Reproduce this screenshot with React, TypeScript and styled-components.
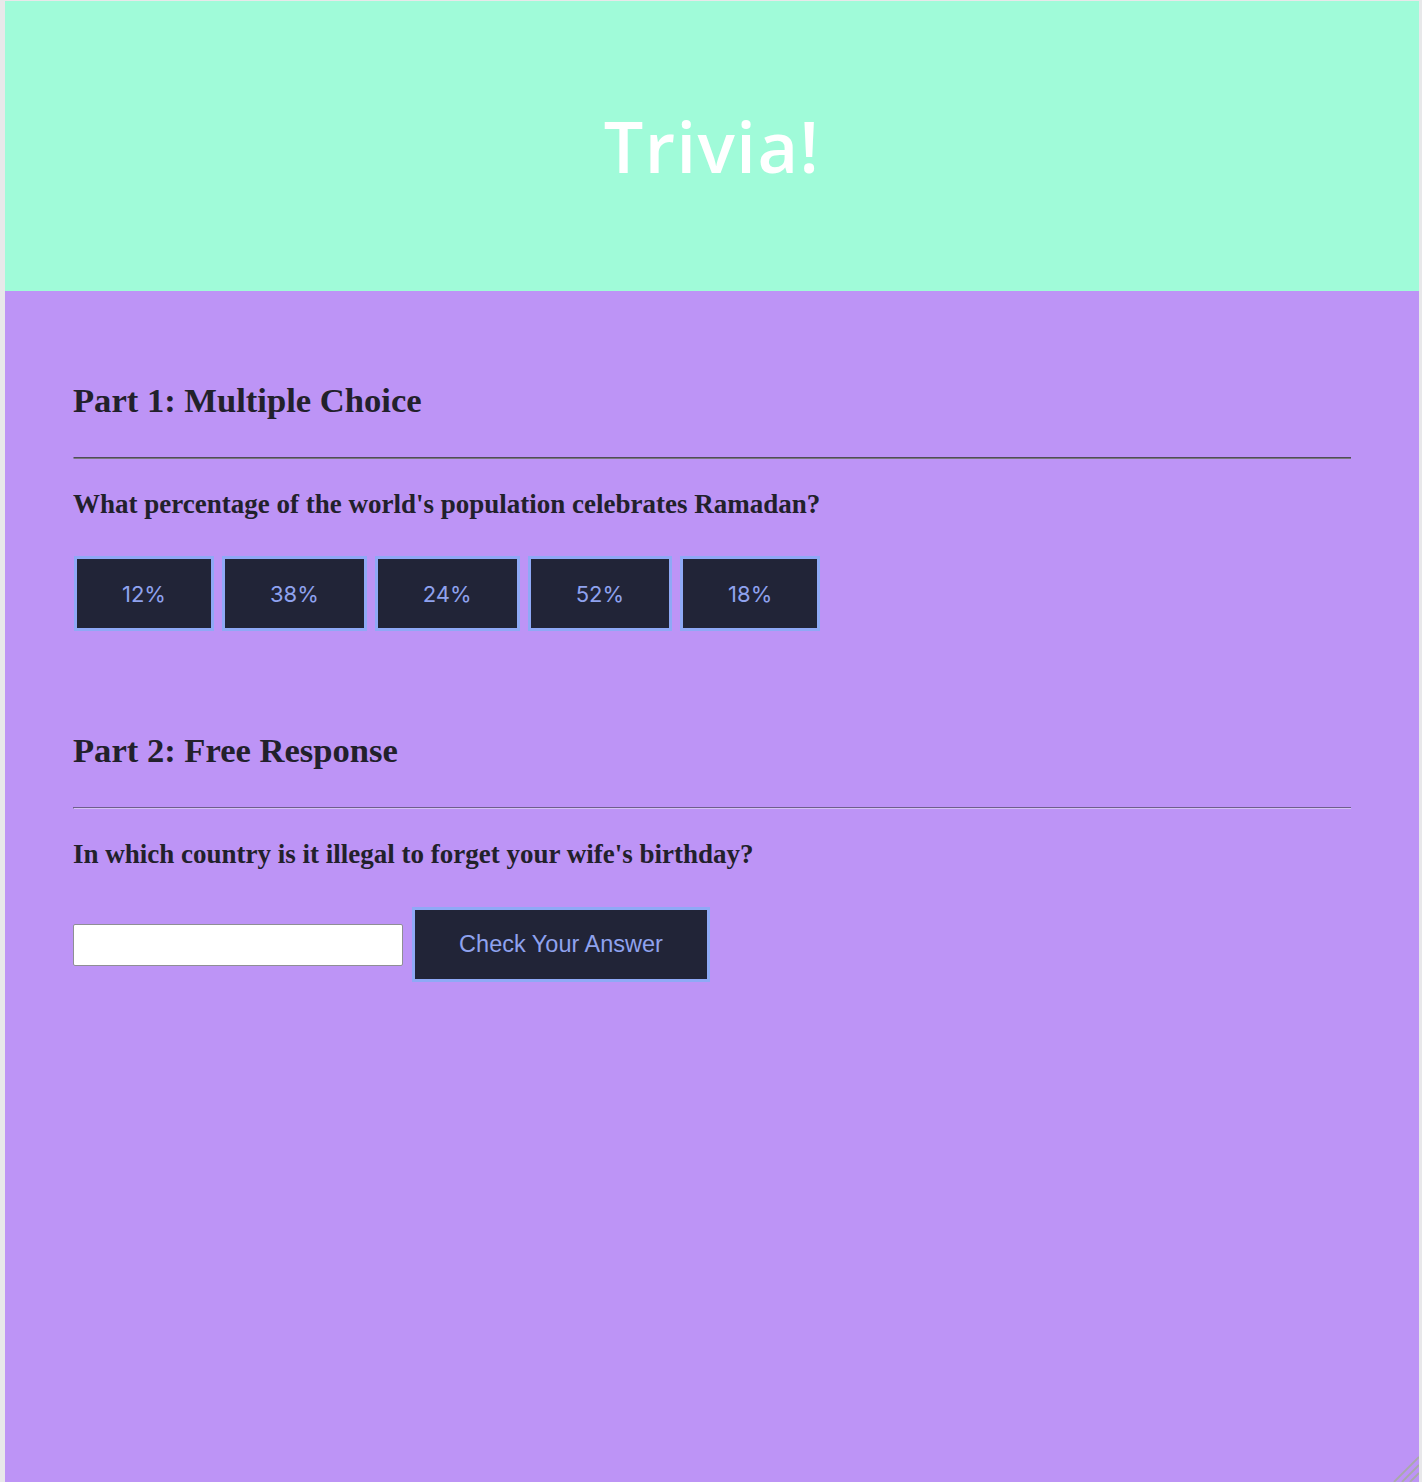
import React from "react";
import styled, { createGlobalStyle } from "styled-components";

const GlobalStyle = createGlobalStyle`
    html, body {
        margin: 0;
        padding: 0;
        background: #e8e8ea;
    }
    body {
        font-family: "Liberation Serif", "Times New Roman", serif;
    }
`;

const choices = ["12%", "38%", "24%", "52%", "18%"];

const App: React.FC = () => {
    return (
        <>
            <GlobalStyle />
            <Frame>
                <Header>
                    <Title>Trivia!</Title>
                </Header>
                <Main>
                    <Section>
                        <SectionTitle>Part 1: Multiple Choice</SectionTitle>
                        <Rule $dark />
                        <Question>What percentage of the world's population celebrates Ramadan?</Question>
                        <Choices>
                            {choices.map((c) => (
                                <ChoiceButton key={c}>{c}</ChoiceButton>
                            ))}
                        </Choices>
                    </Section>
                    <Section>
                        <SectionTitle>Part 2: Free Response</SectionTitle>
                        <Rule />
                        <Question>In which country is it illegal to forget your wife's birthday?</Question>
                        <AnswerRow>
                            <AnswerInput type="text" />
                            <CheckButton>Check Your Answer</CheckButton>
                        </AnswerRow>
                    </Section>
                    {/* textarea-style resize grip in the corner */}
                    <Grip width="26" height="26" viewBox="0 0 26 26">
                        <path
                            d="M26 1 L1 26 M26 9 L9 26 M26 17 L17 26"
                            stroke="#a9a9a9"
                            strokeWidth="1.8"
                        />
                    </Grip>
                </Main>
            </Frame>
        </>
    );
};

const Frame = styled.div`
    margin: 1px 3px 0 5px;
    min-height: 1481px;
    display: flex;
    flex-direction: column;
`;

const Header = styled.header`
    height: 290px;
    background: #a0fbd9;
    display: flex;
    align-items: center;
    justify-content: center;
`;

const Title = styled.h1`
    margin: 0;
    color: #fff;
    font-family: "Open Sans", sans-serif;
    font-weight: 600;
    font-size: 70px;
    letter-spacing: 1.5px;
`;

const Main = styled.main`
    position: relative;
    flex: 1;
    background: #bd94f6;
    padding: 64px 68px 0;
`;

const Section = styled.section`
    margin-bottom: 99px;
`;

const SectionTitle = styled.h2`
    margin: 25px 0 0;
    color: #22212b;
    font-size: 34.6px;
    font-weight: 700;
    line-height: 40px;
`;

const Rule = styled.hr<{ $dark?: boolean }>`
    margin: 37px 0 0;
    height: 0;
    border: none;
    border-top: 1px solid ${(p) => (p.$dark ? "#4f4c58" : "#6f5f8c")};
    border-bottom: 1px solid ${(p) => (p.$dark ? "#7a777f" : "#d4c0f5")};
    border-left: 1px solid ${(p) => (p.$dark ? "transparent" : "#6f5f8c")};
`;

const Question = styled.h3`
    margin: 30px 0 0;
    color: #22212b;
    font-size: 27px;
    font-weight: 700;
    line-height: 30px;
`;

const Choices = styled.div`
    margin-top: 37px;
    display: flex;
    gap: 8px;
    padding-left: 1px;
`;

const ChoiceButton = styled.button`
    height: 75px;
    padding: 0 45px;
    background: #212437;
    border: 3px solid #8fa9f6;
    color: #8fa2ee;
    font-family: Inter, "Noto Sans", sans-serif;
    font-size: 22px;
    cursor: pointer;
`;

const AnswerRow = styled.div`
    margin-top: 38px;
    display: flex;
    align-items: center;
    gap: 9px;
`;

const AnswerInput = styled.input`
    width: 330px;
    height: 42px;
    box-sizing: border-box;
    background: #fff;
    border: 1px solid #8f8f95;
    border-radius: 2px;
`;

const CheckButton = styled.button`
    height: 75px;
    width: 298px;
    background: #212437;
    border: 3px solid #8fa9f6;
    color: #8fa2ee;
    font-family: "Liberation Sans", Arial, sans-serif;
    font-size: 23.5px;
    cursor: pointer;
`;

const Grip = styled.svg`
    position: absolute;
    right: 0;
    bottom: 0;
`;

export default App;
